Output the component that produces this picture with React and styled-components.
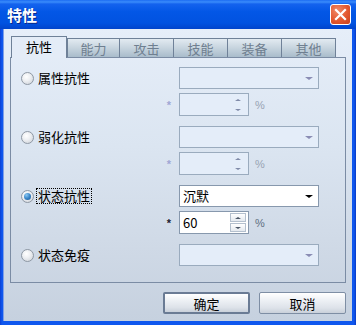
import React from "react";
import styled, { createGlobalStyle } from "styled-components";

const GlobalStyle = createGlobalStyle`
  html, body {
    margin: 0;
    padding: 0;
    background: #0a4ee6;
  }
  body {
    font-family: "Noto Sans CJK SC", "Liberation Sans", sans-serif;
    font-size: 13px;
    color: #000;
  }
`;

const Window = styled.div`
  width: 356px;
  height: 325px;
  display: flex;
  flex-direction: column;
  overflow: hidden;
`;

const TitleBar = styled.div`
  height: 29px;
  flex: none;
  display: flex;
  align-items: center;
  justify-content: space-between;
  padding: 0 5px 0 7px;
  background: linear-gradient(
    #1c6cf2 0,
    #3a8cfb 2px,
    #1462ee 4px,
    #0357e6 40%,
    #0152e0 80%,
    #0144cc 100%
  );
`;

const Title = styled.span`
  font-size: 15px;
  font-weight: bold;
  color: #fff;
  text-shadow: 1px 1px 0 #0b2a8c;
`;

const CloseButton = styled.div`
  width: 21px;
  height: 21px;
  box-sizing: border-box;
  border: 1px solid #fff;
  border-radius: 3px;
  background: radial-gradient(circle at 35% 30%, #f08a68 0, #e3582f 55%, #c9401c 100%);
  display: flex;
  align-items: center;
  justify-content: center;
`;

const Frame = styled.div`
  flex: 1;
  display: flex;
  padding: 0 4px 4px 3px;
  background: linear-gradient(to right, #0b3fd4 0, #0f57ee 2px, #0f57ee calc(100% - 2px), #0838c4 100%);
`;

const Client = styled.div`
  flex: 1;
  display: flex;
  flex-direction: column;
  padding: 7px 6px 0 7px;
  background: linear-gradient(#e6eef9 0, #dbe5f1 40%, #cfd9e6 75%, #c6d1df 100%);
  box-shadow: inset 1px 0 0 #7f9ee6;
`;

const TabStrip = styled.div`
  height: 21px;
  display: flex;
  align-items: flex-end;
  padding-left: 1px;
`;

const Tab = styled.div`
  box-sizing: border-box;
  width: ${(p) => p.$w}px;
  height: ${(p) => (p.$active ? 22 : 19)}px;
  margin-bottom: ${(p) => (p.$active ? -1 : 0)}px;
  position: relative;
  z-index: ${(p) => (p.$active ? 1 : 0)};
  border: 1px solid #6f8198;
  border-bottom: none;
  border-left-width: ${(p) => (p.$first ? 1 : 0)}px;
  background: ${(p) =>
    p.$active ? "#e4ecf7" : "linear-gradient(#e2eaf1 0, #c9d6e0 45%, #a9bccb 100%)"};
  color: ${(p) => (p.$active ? "#000" : "#6f7f90")};
  display: flex;
  align-items: center;
  justify-content: center;
  padding-bottom: ${(p) => (p.$active ? 2 : 0)}px;
  font-size: 13px;
`;

const Panel = styled.div`
  box-sizing: border-box;
  height: 226px;
  border: 1px solid #7b8ca4;
  padding-top: 9px;
  display: flex;
  flex-direction: column;
  gap: 10px;
`;

const Group = styled.div`
  display: flex;
  flex-direction: column;
  gap: 4px;
`;

const Row = styled.div`
  display: flex;
  align-items: center;
  height: ${(p) => p.$h}px;
`;

const LeftCell = styled.div`
  width: 168px;
  box-sizing: border-box;
  padding: 0 8px 0 10px;
  display: flex;
  align-items: center;
  justify-content: ${(p) => (p.$end ? "flex-end" : "flex-start")};
`;

const RadioCircle = styled.span`
  width: 13px;
  height: 13px;
  box-sizing: border-box;
  border-radius: 50%;
  border: 1px solid #8e98a4;
  background: radial-gradient(circle at 40% 35%, #ffffff 0, #eef0f3 40%, #c9ced5 100%);
  display: flex;
  align-items: center;
  justify-content: center;
  margin-right: 3px;
  flex: none;
`;

const RadioDot = styled.span`
  width: 7px;
  height: 7px;
  border-radius: 50%;
  background: radial-gradient(circle at 35% 30%, #8cc8f2 0, #3a86c8 50%, #1b5690 100%);
`;

const LabelText = styled.span`
  line-height: 14px;
  padding: 0 1px;
  outline: ${(p) => (p.$focus ? "1px dotted #000" : "none")};
`;

const Star = styled.span`
  font-family: "Liberation Sans", sans-serif;
  font-size: 11px;
  font-weight: bold;
  color: ${(p) => (p.$on ? "#1a1a2e" : "#a0a6d4")};
`;

const Combo = styled.div`
  box-sizing: border-box;
  width: 140px;
  height: 22px;
  border: 1px solid ${(p) => (p.$on ? "#8798ad" : "#9aabbe")};
  background: ${(p) => (p.$on ? "#fff" : "#e4edf9")};
  display: flex;
  align-items: center;
  justify-content: space-between;
  padding: 0 5px 0 3px;
`;

const ComboText = styled.span`
  line-height: 14px;
`;

const Triangle = styled.span`
  width: 0;
  height: 0;
  border-left: ${(p) => p.$s}px solid transparent;
  border-right: ${(p) => p.$s}px solid transparent;
  ${(p) => (p.$up ? "border-bottom" : "border-top")}: ${(p) => p.$s - 1}px solid ${(p) => p.$c};
`;

const Spin = styled.div`
  box-sizing: border-box;
  width: 70px;
  height: 23px;
  border: 1px solid ${(p) => (p.$on ? "#8798ad" : "#9aabbe")};
  background: ${(p) => (p.$on ? "#fff" : "#e4edf9")};
  display: flex;
  align-items: center;
  justify-content: space-between;
  padding: 0 2px 0 3px;
`;

const SpinButtons = styled.div`
  display: flex;
  flex-direction: column;
  gap: 1px;
`;

const SpinButton = styled.div`
  box-sizing: border-box;
  width: 16px;
  height: 9px;
  border: 1px solid ${(p) => (p.$on ? "#b4c0ce" : "transparent")};
  background: ${(p) => (p.$on ? "linear-gradient(#ffffff, #e4e9ef)" : "transparent")};
  display: flex;
  align-items: center;
  justify-content: center;
`;

const Percent = styled.span`
  font-family: "Liberation Sans", sans-serif;
  font-size: 11px;
  margin-left: 6px;
  color: ${(p) => (p.$on ? "#5f6e80" : "#98a3b3")};
`;

const ButtonRow = styled.div`
  display: flex;
  justify-content: flex-end;
  gap: 9px;
  margin-top: 9px;
`;

const Button = styled.div`
  box-sizing: border-box;
  width: 87px;
  height: 22px;
  border: ${(p) => (p.$default ? "2px solid #6a7b94" : "1px solid #7e8ea4")};
  border-radius: 2px;
  background: linear-gradient(#ffffff 0, #eef1f5 35%, #dde2e9 75%, #c9d0da 100%);
  display: flex;
  align-items: center;
  justify-content: center;
  font-size: 13px;
`;

const tabs = [
  { label: "抗性", w: 56, active: true },
  { label: "能力", w: 53 },
  { label: "攻击", w: 54 },
  { label: "技能", w: 54 },
  { label: "装备", w: 54 },
  { label: "其他", w: 54 },
];

const groups = [
  { label: "属性抗性" },
  { label: "弱化抗性" },
  { label: "状态抗性", on: true, value: "沉默", num: "60" },
  { label: "状态免疫", noSpin: true },
];

function Radio({ checked }) {
  return <RadioCircle>{checked && <RadioDot />}</RadioCircle>;
}

function SpinBox({ on, value }) {
  const c = on ? "#4a5566" : "#7f8aa8";
  return (
    <Spin $on={on}>
      <ComboText>{value}</ComboText>
      <SpinButtons>
        <SpinButton $on={on}>
          <Triangle $s={3} $up $c={c} />
        </SpinButton>
        <SpinButton $on={on}>
          <Triangle $s={3} $c={c} />
        </SpinButton>
      </SpinButtons>
    </Spin>
  );
}

export default function App() {
  return (
    <Window>
      <GlobalStyle />
      <TitleBar>
        <Title>特性</Title>
        <CloseButton>
          <svg width="13" height="13" viewBox="0 0 13 13">
            <path d="M2 2 L11 11 M11 2 L2 11" stroke="#fff" strokeWidth="2.2" strokeLinecap="square" />
          </svg>
        </CloseButton>
      </TitleBar>
      <Frame>
        <Client>
          <TabStrip>
            {tabs.map((t, i) => (
              <Tab key={t.label} $w={t.w} $active={t.active} $first={i === 0 || i === 1}>
                {t.label}
              </Tab>
            ))}
          </TabStrip>
          <Panel>
            {groups.map((g) => (
              <Group key={g.label}>
                <Row $h={22}>
                  <LeftCell>
                    <Radio checked={g.on} />
                    <LabelText $focus={g.on}>{g.label}</LabelText>
                  </LeftCell>
                  <Combo $on={g.on}>
                    <ComboText>{g.value}</ComboText>
                    <Triangle $s={4} $c={g.on ? "#000" : "#8a8cb4"} />
                  </Combo>
                </Row>
                {!g.noSpin && (
                  <Row $h={23}>
                    <LeftCell $end>
                      <Star $on={g.on}>*</Star>
                    </LeftCell>
                    <SpinBox on={g.on} value={g.num} />
                    <Percent $on={g.on}>%</Percent>
                  </Row>
                )}
              </Group>
            ))}
          </Panel>
          <ButtonRow>
            <Button $default>确定</Button>
            <Button>取消</Button>
          </ButtonRow>
        </Client>
      </Frame>
    </Window>
  );
}
